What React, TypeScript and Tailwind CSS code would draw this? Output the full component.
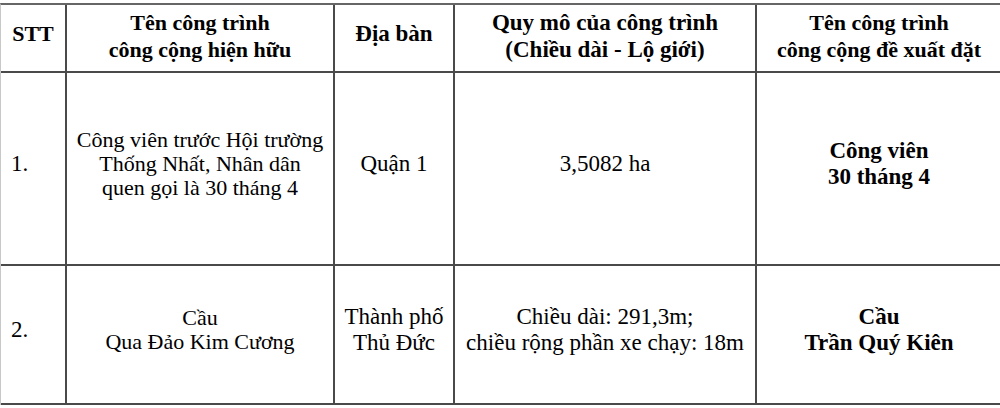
import React from 'react'

type Row = {
  stt: string
  existing: string[]
  area: string[]
  scale: string[]
  proposed: string[]
  height: string
}

const rows: Row[] = [
  {
    stt: '1.',
    existing: ['Công viên trước Hội trường', 'Thống Nhất, Nhân dân', 'quen gọi là 30 tháng 4'],
    area: ['Quận 1'],
    scale: ['3,5082 ha'],
    proposed: ['Công viên', '30 tháng 4'],
    height: 'h-[193px]',
  },
  {
    stt: '2.',
    existing: ['Cầu', 'Qua Đảo Kim Cương'],
    area: ['Thành phố', 'Thủ Đức'],
    scale: ['Chiều dài: 291,3m;', 'chiều rộng phần xe chạy: 18m'],
    proposed: ['Cầu', 'Trần Quý Kiên'],
    height: 'h-[139px]',
  },
]

function Lines({ lines }: { lines: string[] }) {
  return (
    <>
      {lines.map(l => (
        <span key={l} className="block whitespace-nowrap">
          {l}
        </span>
      ))}
    </>
  )
}

const cell = 'flex flex-col items-center justify-center text-center border-b-2 border-[#4a4a4a]'

export default function App() {
  return (
    <div className="h-[408px] w-[1000px] overflow-hidden bg-white pt-[3px] font-['Liberation_Serif','Times_New_Roman',serif] text-[23px] leading-[26px] text-black">
      <div className="grid grid-cols-[66px_268px_120px_302px_244px] border-t-2 border-l border-t-[#666] border-l-[#c8c8c8]">
        {/* header */}
        <div className={`${cell} h-[68px] border-r-2 pb-[8px] text-[22px] font-bold`}>STT</div>
        <div className={`${cell} h-[68px] border-r-2 pb-[4px] text-[22px] leading-[27px] font-bold`}>
          <Lines lines={['Tên công trình', 'công cộng hiện hữu']} />
        </div>
        <div className={`${cell} h-[68px] border-r-2 pb-[8px] font-bold`}>Địa bàn</div>
        <div className={`${cell} h-[68px] border-r-2 pb-[4px] leading-[27px] font-bold`}>
          <Lines lines={['Quy mô của công trình', '(Chiều dài - Lộ giới)']} />
        </div>
        <div className={`${cell} h-[68px] pb-[4px] text-[22px] leading-[27px] font-bold`}>
          <Lines lines={['Tên công trình', 'công cộng đề xuất đặt']} />
        </div>

        {rows.map(r => (
          <React.Fragment key={r.stt}>
            <div className={`${cell} ${r.height} !items-start border-r-2 pb-[10px] pl-[10px]`}>{r.stt}</div>
            <div className={`${cell} ${r.height} border-r-2 pb-[10px] text-[22px] leading-[24px]`}>
              <Lines lines={r.existing} />
            </div>
            <div className={`${cell} ${r.height} border-r-2 pb-[10px]`}>
              <Lines lines={r.area} />
            </div>
            <div className={`${cell} ${r.height} border-r-2 pb-[10px]`}>
              <Lines lines={r.scale} />
            </div>
            <div className={`${cell} ${r.height} pb-[10px] font-bold`}>
              <Lines lines={r.proposed} />
            </div>
          </React.Fragment>
        ))}
      </div>
    </div>
  )
}
